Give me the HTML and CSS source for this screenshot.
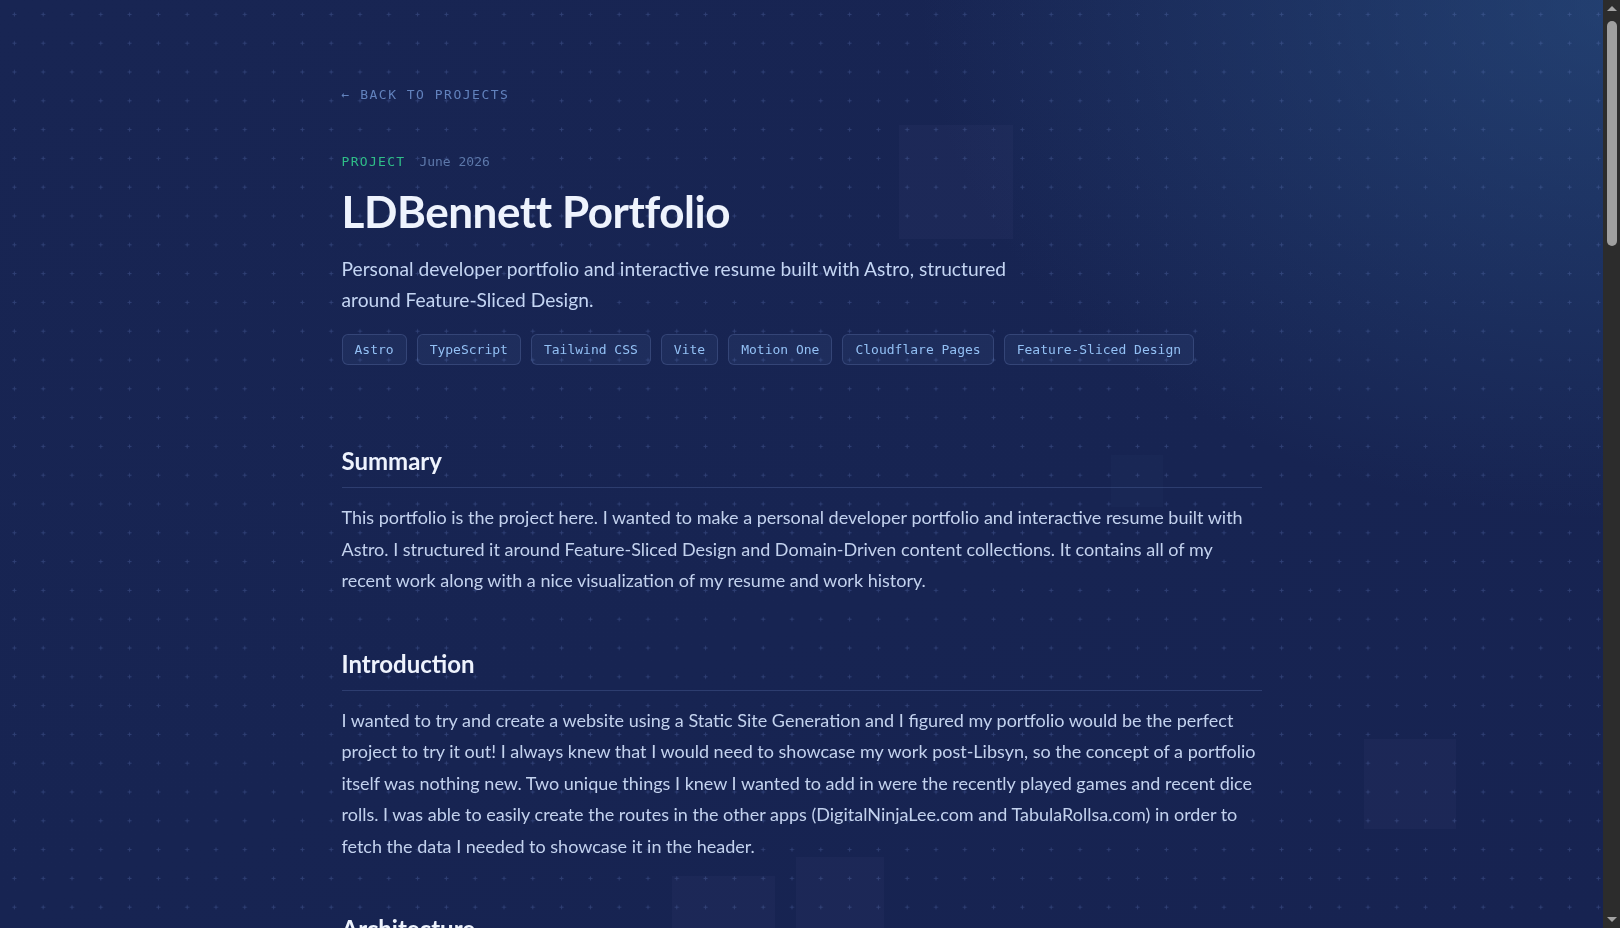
FILE: index.html
```html
<!DOCTYPE html>
<html lang="en">
<head>
    <meta charset="UTF-8">
    <meta name="viewport" content="width=device-width, initial-scale=1.0">
    <title>LDBennett Portfolio | Projects</title>
    <link rel="stylesheet" href="styles.css">
</head>
<body>

    <!-- Background: plus grid and a few floating tiles -->
    <div class="backdrop" aria-hidden="true">
        <svg class="grid" width="100%" height="100%">
            <defs>
                <pattern id="plus" width="28.8" height="28.8" patternUnits="userSpaceOnUse">
                    <path d="M14.4 12.4v4M12.4 14.4h4" stroke="#6f88cf" stroke-opacity="0.28" stroke-width="1"/>
                </pattern>
            </defs>
            <rect width="100%" height="100%" fill="url(#plus)"/>
        </svg>
        <div class="tile tile-a"></div>
        <div class="tile tile-b"></div>
        <div class="tile tile-c"></div>
        <div class="tile tile-d"></div>
        <div class="tile tile-e"></div>
    </div>

    <!-- Dark classic scroll rail -->
    <div class="rail" aria-hidden="true">
        <span class="rail-arrow up"></span>
        <span class="rail-thumb"></span>
        <span class="rail-arrow down"></span>
    </div>

    <main class="page">
        <a class="back-link" href="#">&larr; Back to projects</a>

        <header class="project-head">
            <div class="meta">
                <span class="kind">Project</span>
                <span class="date">June 2026</span>
            </div>
            <h1>LDBennett Portfolio</h1>
            <p class="lead">Personal developer portfolio and interactive resume built with Astro, structured around Feature-Sliced Design.</p>
            <ul class="tags">
                <li>Astro</li>
                <li>TypeScript</li>
                <li>Tailwind CSS</li>
                <li>Vite</li>
                <li>Motion One</li>
                <li>Cloudflare Pages</li>
                <li>Feature-Sliced Design</li>
            </ul>
        </header>

        <article class="body">
            <section>
                <h2>Summary</h2>
                <p>This portfolio is the project here. I wanted to make a personal developer portfolio and interactive resume built with Astro. I structured it around Feature-Sliced Design and Domain-Driven content collections. It contains all of my recent work along with a nice visualization of my resume and work history.</p>
            </section>

            <section>
                <h2>Introduction</h2>
                <p>I wanted to try and create a website using a Static Site Generation and I figured my portfolio would be the perfect project to try it out! I always knew that I would need to showcase my work post-Libsyn, so the concept of a portfolio itself was nothing new. Two unique things I knew I wanted to add in were the recently played games and recent dice rolls. I was able to easily create the routes in the other apps (DigitalNinjaLee.com and TabulaRollsa.com) in order to fetch the data I needed to showcase it in the header.</p>
            </section>

            <section>
                <h2>Architecture</h2>
                <p>The site follows Feature-Sliced Design, so every piece of the UI lives in a layer: app, pages, widgets, features, entities and shared. Pages only compose widgets, widgets compose features, and nothing reaches upward. It keeps each slice small and makes it obvious where a new component belongs.</p>
                <p>Content lives in Astro content collections. Projects, jobs and skills each have their own schema, so a missing field fails the build instead of showing up as a blank card in production.</p>
            </section>

            <section>
                <h2>The Header Widgets</h2>
                <p>The recently played games and recent dice rolls are fetched at build time from small JSON routes on the other two apps. A scheduled rebuild on Cloudflare Pages keeps them fresh without shipping any client-side fetching, and each widget falls back to an empty state if a route is unavailable.</p>
            </section>

            <section>
                <h2>Resume Timeline</h2>
                <p>The interactive resume draws each role as a bar on a shared timeline. Overlapping roles stack into lanes, and hovering a bar highlights the skills that were used there. Motion One handles the small entrance animations so the page stays light.</p>
                <p>Everything is generated from the same collections that feed the project pages, so updating a job entry updates the timeline, the skills list and the printable resume at once.</p>
            </section>

            <section>
                <h2>Styling</h2>
                <p>Tailwind CSS covers almost all of the styling. A handful of design tokens for colors, spacing and type sit in the shared layer, and the background grid with its drifting tiles is a single component that every page reuses.</p>
            </section>

            <section>
                <h2>Performance</h2>
                <p>Because every page is prerendered, the only JavaScript that ships is the little bit needed for the timeline and the animations. Astro islands keep those scripts scoped to the components that need them, and everything else is plain HTML and CSS.</p>
                <p>Images go through the Astro image pipeline, so each screenshot is resized and served in a modern format without any extra work when a new project is added.</p>
            </section>

            <section>
                <h2>Accessibility</h2>
                <p>All of the animations respect the reduced motion setting, the color palette was checked for contrast against the dark background, and the timeline has a plain list fallback so screen readers get the same information as the visual version.</p>
            </section>

            <section>
                <h2>Deployment</h2>
                <p>The site builds with Vite through Astro and deploys to Cloudflare Pages on every push to main. Preview deployments on pull requests made it easy to check layout changes on real devices before merging.</p>
            </section>

            <section>
                <h2>Lessons Learned</h2>
                <p>Static generation turned out to be a great fit for a portfolio. Pages load instantly, there is no server to maintain, and the content schemas caught a surprising number of mistakes. Feature-Sliced Design felt heavy at first for a site this size, but it paid off once the resume and project pages started sharing pieces.</p>
                <p>If I started over I would set up the content schemas first and build the pages around them, rather than the other way around.</p>
            </section>
        </article>

        <footer class="project-foot">
            <a class="back-link" href="#">&larr; Back to projects</a>
            <a class="next-link" href="#">Next project &rarr;</a>
        </footer>
    </main>

</body>
</html>
```

FILE: styles.css
```css
/* General reset */
* {
    margin: 0;
    padding: 0;
    box-sizing: border-box;
}

html {
    color-scheme: dark;
    background-color: #172452;
}

body {
    min-height: 100vh;
    padding-right: 17px; /* room for the scroll rail */
    font-family: Lato, "Open Sans", sans-serif;
    color: #c3d2ee;
    background:
        radial-gradient(ellipse 700px 520px at 100% 0%, rgba(44, 86, 138, 0.55), rgba(44, 86, 138, 0) 100%),
        linear-gradient(160deg, #182553 0%, #172452 60%, #172351 100%);
    background-attachment: fixed;
}

/* Background layer */
.backdrop {
    position: fixed;
    inset: 0;
    z-index: 0;
    pointer-events: none;
}

.grid {
    position: absolute;
    inset: 0;
}

.tile {
    position: absolute;
    background-color: rgba(160, 180, 230, 0.035);
}

.tile-a { left: 899px; top: 125px; width: 114px; height: 114px; }
.tile-b { left: 672px; top: 876px; width: 103px; height: 103px; }
.tile-c { left: 796px; top: 857px; width: 88px; height: 88px; }
.tile-d { left: 1364px; top: 739px; width: 92px; height: 90px; }
.tile-e { left: 1111px; top: 455px; width: 52px; height: 52px; background-color: rgba(160, 180, 230, 0.02); }

/* Scroll rail on the right edge */
.rail {
    position: fixed;
    top: 0;
    right: 0;
    bottom: 0;
    z-index: 5;
    width: 17px;
    display: flex;
    flex-direction: column;
    align-items: center;
    background-color: #2c2c2c;
}

.rail-arrow {
    width: 0;
    height: 0;
    border-left: 5px solid transparent;
    border-right: 5px solid transparent;
    margin-left: 1px;
}

.rail-arrow.up {
    margin-top: 6px;
    border-bottom: 5px solid #a3a3a3;
}

.rail-arrow.down {
    margin-top: auto;
    margin-bottom: 6px;
    border-top: 5px solid #a3a3a3;
}

.rail-thumb {
    width: 10px;
    height: 225px;
    margin-top: 10px;
    margin-left: 1px;
    border-radius: 5px;
    background-color: #9f9f9f;
}

/* Page column */
.page {
    position: relative;
    z-index: 1;
    max-width: 960px;
    margin: 0 auto;
    padding: 83px 20px 160px;
}

.back-link {
    display: inline-block;
    font-family: "DejaVu Sans Mono", monospace;
    font-size: 13px;
    line-height: 18px;
    letter-spacing: 1.5px;
    text-transform: uppercase;
    text-decoration: none;
    color: #6282bd;
}

.project-head {
    margin-top: 48px;
}

.meta {
    display: flex;
    gap: 14px;
    font-family: "DejaVu Sans Mono", monospace;
    font-size: 13px;
    line-height: 20px;
}

.kind {
    color: #2fbe88;
    letter-spacing: 0.1em;
    text-transform: uppercase;
}

.date {
    color: #5d78aa;
}

h1 {
    margin-top: 12px;
    font-size: 44px;
    line-height: 54px;
    font-weight: 700;
    letter-spacing: -0.01em;
    color: #eef3fd;
}

.lead {
    max-width: 690px;
    margin-top: 15px;
    font-size: 19.2px;
    line-height: 31px;
    color: #c4d5f3;
}

.tags {
    display: flex;
    flex-wrap: wrap;
    gap: 10px;
    margin-top: 19px;
    list-style: none;
}

.tags li {
    padding: 0 12px;
    height: 31px;
    line-height: 29px;
    font-family: "DejaVu Sans Mono", monospace;
    font-size: 13px;
    color: #93c0f4;
    background-color: rgba(120, 150, 220, 0.08);
    border: 1px solid rgba(130, 155, 215, 0.22);
    border-radius: 6px;
}

/* Article sections */
.body {
    margin-top: 80px;
}

.body section + section {
    margin-top: 51px;
}

h2 {
    font-size: 24px;
    line-height: 32px;
    font-weight: 700;
    color: #eef3fd;
    padding-bottom: 10px;
    border-bottom: 1px solid rgba(110, 135, 200, 0.25);
    margin-bottom: 14px;
}

.body p {
    font-size: 18px;
    line-height: 31.5px;
    color: #c3d2ee;
}

.body p + p {
    margin-top: 20px;
}

/* Footer navigation */
.project-foot {
    display: flex;
    justify-content: space-between;
    margin-top: 96px;
    padding-top: 32px;
    border-top: 1px solid rgba(110, 135, 200, 0.25);
}

.next-link {
    font-size: 16px;
    font-weight: 700;
    text-decoration: none;
    color: #93c0f4;
}
```
